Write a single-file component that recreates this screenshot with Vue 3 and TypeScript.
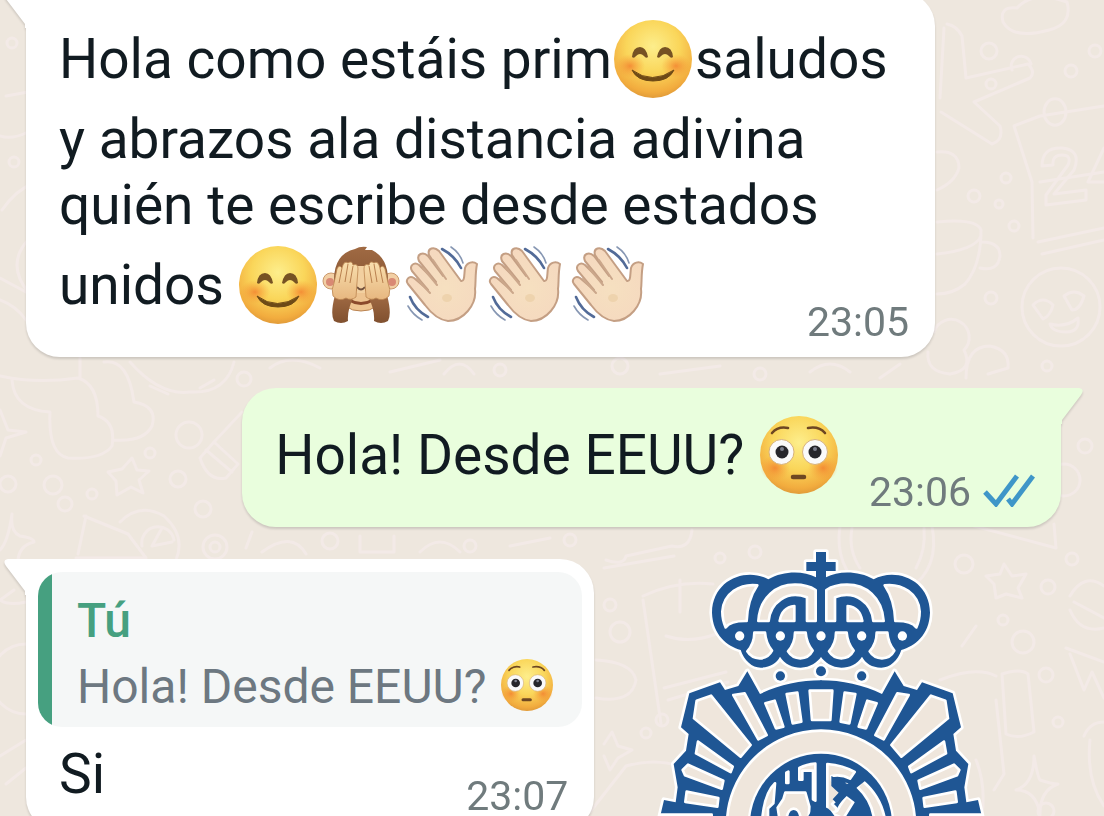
<script setup lang="ts">
interface Dot { x: number; y: number; r: number }

const firstLines: string[] = ['y abrazos ala distancia adivina', 'quién te escribe desde estados']
const closingEmoji: string[] = ['smile', 'monkey', 'wave', 'wave', 'wave']

const dots: Dot[] = [
  { x: 989, y: 51, r: 8 }, { x: 1071, y: 71, r: 6 }, { x: 1095, y: 51, r: 6 }, { x: 991, y: 84, r: 5 },
  { x: 1006, y: 178, r: 5 }, { x: 974, y: 196, r: 6 }, { x: 999, y: 204, r: 4 }, { x: 1014, y: 226, r: 5 },
  { x: 991, y: 298, r: 6 }, { x: 1047, y: 366, r: 5 }, { x: 244, y: 379, r: 7 }, { x: 189, y: 435, r: 13 },
  { x: 150, y: 453, r: 5 }, { x: 178, y: 479, r: 8 }, { x: 53, y: 485, r: 9 }, { x: 8, y: 484, r: 8 },
  { x: 36, y: 460, r: 5 }, { x: 92, y: 494, r: 5 }, { x: 65, y: 504, r: 7 }, { x: 203, y: 509, r: 8 },
  { x: 215, y: 547, r: 12 }, { x: 215, y: 547, r: 5 }, { x: 1085, y: 446, r: 7 }, { x: 1064, y: 480, r: 16 },
  { x: 964, y: 564, r: 9 }, { x: 1072, y: 559, r: 6 }, { x: 1048, y: 587, r: 7 }, { x: 755, y: 552, r: 6 },
  { x: 720, y: 558, r: 5 }, { x: 620, y: 632, r: 10 }, { x: 610, y: 605, r: 6 }, { x: 1023, y: 642, r: 11 },
  { x: 1003, y: 620, r: 5 }, { x: 1046, y: 675, r: 7 }, { x: 1058, y: 722, r: 5 }, { x: 662, y: 720, r: 6 },
  { x: 646, y: 733, r: 5 }, { x: 1046, y: 811, r: 8 }, { x: 12, y: 43, r: 5 }, { x: 14, y: 162, r: 5 },
  { x: 500, y: 370, r: 6 }, { x: 620, y: 366, r: 8 }, { x: 760, y: 374, r: 6 }, { x: 330, y: 541, r: 8 },
  { x: 470, y: 546, r: 6 }, { x: 570, y: 540, r: 6 },
]

const doodles: string[] = [
  'M1003 22q-4 -16 14 -14q16 -18 50 -6q6 22 -18 28q-36 10 -46 -8z',
  'M947 24q10 2 15 12l4 42l62 -14q8 8 2 14l-56 24l26 24q4 14 -8 18l-51 -32M940 98l4 -70M1012 70a10 10 0 1 1 19 -6',
  'M1104 106l-64 10l-26 10l18 56l1 56M1040 182l64 -10M1038 242l66 -14M1042 254l62 -14M1044 112a10 12 0 1 1 22 0a10 12 0 1 1 -22 0',
  'M1042 166q0 -19 20 -18q20 2 12 22l-20 24l32 -4v10l-40 5v-10l22 -30q4 -10 -6 -10q-10 0 -9 10zM1104 148l-16 34h16',
  'M937 222q40 -4 44 8q0 36 -16 54q-12 10 -28 10M937 254q38 -4 44 -18M982 242q18 0 18 14q-2 16 -20 12',
  'M937 152q22 -2 22 16q-4 14 -22 22',
  'M1022 307a39 39 0 1 1 78 0a39 39 0 1 1 -78 0M1033 305q10 -10 20 0q-2 10 -10 14zM1064 296q10 -8 20 0q-4 14 -12 14zM1050 324q16 4 28 -6q2 14 -12 14q-14 0 -16 -8z',
  'M934 332a18 18 0 1 1 30 18q10 20 -14 24q-24 -2 -22 -22M966 378q0 -32 24 -32q20 4 18 22l-20 6',
  'M0 376q36 8 78 2q20 6 20 38q18 6 14 30q-10 14 -44 12q-20 -4 -18 -46q-36 -2 -38 -32M80 358v20M104 362q24 -4 30 40q24 4 18 24q-8 16 -38 14',
  'M130 362q30 34 60 30q36 2 44 -30M150 386l18 8M200 388l14 -8',
  'M132 458l5 12l12 1l-10 9l4 13l-12 -6l-14 8l-1 -14l-8 -9l14 -3z',
  'M214 442l28 -30M200 458l14 -16l24 22l-12 14q-18 4 -26 -20zM206 450l26 22',
  'M84 516l44 18M78 554l8 -38M76 558h70l-18 -24M120 522q20 -20 44 -6q22 20 12 44M142 546a16 16 0 0 1 32 -6M152 546l20 -4M152 546l10 -18',
  'M0 410l8 20l18 2l-20 6l-6 18M12 514q-4 28 -12 36M12 514q-2 18 8 22q14 2 14 6q-16 4 -16 20',
  'M840 526q-6 40 24 64M932 526q8 42 -22 62M852 528q-4 22 8 40M924 528q2 22 -8 40',
  'M606 560q18 6 20 -4l46 -10q18 4 20 -16M604 568l70 -12',
  'M643 596q34 -16 70 -12M643 600l18 124M666 636q24 8 50 -2M680 580v32M664 688l62 -16M668 700l60 -18',
  'M596 660q36 2 40 20q-4 24 -40 18M604 744l8 -12l6 14l14 4l-14 8l-8 12l-6 -14',
  'M974 526l82 22l-2 -24M1004 564l8 12l14 -2l-8 14l4 10l-16 -4l-10 4l-2 -14l-8 -8l14 -2z',
  'M1070 596q14 -24 34 -10M1070 610q10 24 34 18M1074 602l30 16M1070 654l14 36l8 -18l12 26M1066 648l38 14',
  'M1002 674q18 -6 26 0l6 58q-16 8 -28 2zM996 700l8 74l-10 16M962 646l14 -20M940 680q36 -14 56 -4',
  'M1034 756q4 22 6 24q12 4 18 4q-18 6 -18 30q-4 -24 -24 -24q18 -6 18 -34M1084 736q6 -14 20 -14M1090 740q-4 40 14 66',
  'M590 812l36 -46q28 -8 54 0M976 760q10 24 6 56',
  'M0 136q12 4 28 -4M2 210q14 -20 30 -26M28 240q-22 24 0 52M0 278l26 14M6 96l22 -4M0 300q16 6 26 20',
  'M26 644a35 35 0 0 0 0 70M0 600q8 6 26 2M0 756l26 -16M6 784l20 -16M0 600l14 -10',
  'M270 368q20 -16 50 0M390 372l50 -12M444 374q16 -20 30 0M660 374l60 -8M810 372q20 -16 40 0M880 378l20 -14',
  'M262 552q30 -22 44 2M360 536v16h34v-16M420 552q20 -20 40 0M510 546l40 -8M252 532l-6 16',
]

const crownPearls: number[] = [299, 421, 543, 665, 787]
const crownDrops: number[] = [0, 122, 245, 367]
</script>

<template>
  <main class="chat">
    <svg class="defs" aria-hidden="true">
      <defs>
        <radialGradient id="face" cx="50%" cy="34%" r="68%">
          <stop offset="0" stop-color="#fdee8c" />
          <stop offset=".5" stop-color="#fad65a" />
          <stop offset=".86" stop-color="#f2ac3e" />
          <stop offset="1" stop-color="#dd9738" />
        </radialGradient>
        <radialGradient id="cheek">
          <stop offset="0" stop-color="#f27a2c" stop-opacity=".75" />
          <stop offset="1" stop-color="#f59a35" stop-opacity="0" />
        </radialGradient>
        <radialGradient id="skin" cx="55%" cy="55%" r="60%">
          <stop offset="0" stop-color="#f6e0c0" />
          <stop offset="1" stop-color="#f5d8bf" />
        </radialGradient>
        <linearGradient id="fur" x1="0" y1="0" x2="0" y2="1">
          <stop offset="0" stop-color="#a06a43" />
          <stop offset="1" stop-color="#80502f" />
        </linearGradient>
        <linearGradient id="paw" x1="0" y1="0" x2="0" y2="1">
          <stop offset="0" stop-color="#f9dfae" />
          <stop offset="1" stop-color="#e7b780" />
        </linearGradient>
        <symbol id="smile" viewBox="0 0 78 78">
          <circle cx="39" cy="39" r="39" fill="url(#face)" />
          <ellipse cx="16" cy="46" rx="15" ry="12" fill="url(#cheek)" />
          <ellipse cx="62" cy="46" rx="15" ry="12" fill="url(#cheek)" />
          <path d="M18 37Q19 27 26 27Q32 27 34 37Q32 39 30 36Q26 32 22 36Q20 39 18 37Z" fill="#765223" />
          <path d="M43 37Q45 27 51 27Q58 27 59 37Q57 39 55 36Q51 32 47 36Q45 39 43 37Z" fill="#765223" />
          <path d="M18 50Q38 65 60 50Q55 61 39 61Q23 61 18 50Z" fill="#6e4a16" stroke="#6e4a16" stroke-linejoin="round" />
        </symbol>
        <symbol id="flushed" viewBox="0 0 78 78">
          <circle cx="39" cy="39" r="39" fill="url(#face)" />
          <ellipse cx="15" cy="52" rx="15" ry="13" fill="url(#cheek)" />
          <ellipse cx="63" cy="52" rx="15" ry="13" fill="url(#cheek)" />
          <g fill="#fafafa" stroke="#d8b27a">
            <circle cx="21.5" cy="36" r="12.5" /><circle cx="55" cy="36" r="12.5" />
          </g>
          <g fill="#26262b">
            <circle cx="22" cy="36" r="6.5" /><circle cx="55" cy="36" r="6.5" />
          </g>
          <g fill="#7c7f8c"><circle cx="22" cy="33" r="2" /><circle cx="55" cy="33" r="2" /></g>
          <path d="M12 17Q18 10 28 12M48 12Q59 10 65 17" fill="none" stroke="#6e4722" stroke-width="2.6" stroke-linecap="round" />
          <path d="M33 61H44" stroke="#6e4722" stroke-width="4.5" stroke-linecap="round" />
        </symbol>
        <symbol id="monkey" viewBox="0 0 78 78">
          <circle cx="9" cy="35" r="8" fill="#f2cfa4" stroke="#c9986c" />
          <circle cx="69" cy="35" r="8" fill="#f2cfa4" stroke="#c9986c" />
          <circle cx="8" cy="36" r="4" fill="#d98974" /><circle cx="70" cy="36" r="4" fill="#d98974" />
          <path d="M12 34Q12 8 33 3Q38 0 45 1L43 4L50 4Q66 12 66 34Q64 50 39 52Q14 50 12 34Z" fill="url(#fur)" />
          <path d="M20 48Q39 40 58 48Q58 65 39 65Q20 65 20 48Z" fill="#eec491" stroke="#b98250" />
          <path d="M27 54Q39 61 51 54" fill="none" stroke="#8b4a2c" stroke-width="3" stroke-linecap="round" />
          <path d="M34 20H44L43 47H35Z" fill="#f2d0a0" />
          <path d="M35 41Q39 46 43 41" fill="none" stroke="#71503d" stroke-width="2" />
          <path id="monkey-arm" d="M13 49Q8 68 12 75Q19 79 26 75Q25 64 32 50Z" fill="url(#fur)" />
          <use href="#monkey-arm" transform="translate(78 0) scale(-1 1)" />
          <path id="monkey-paw" d="M11 50Q9 43 12 37L15 23Q17 18 20 22Q22 14 26 17Q30 14 31 19Q36 17 36 23L34 51Q29 55 24 52Q17 56 11 50Z" fill="url(#paw)" stroke="#bc8652" stroke-width=".8" />
          <use href="#monkey-paw" transform="translate(78 0) scale(-1 1)" />
          <path d="M20 22L17 37M26 18L23 36M31 20L28 37M58 22L61 37M52 18L55 36M47 20L50 37" fill="none" stroke="#b8804f" />
        </symbol>
        <symbol id="wave" viewBox="0 0 78 78">
          <path d="M3 38C0 34 4 29 9 32L23 44L7 25C4 20 9 15 14 19L31 36L14 15C11 8 18 5 23 10L38 30L24 9C22 2 29 0 34 5L56 35C60 36 59 28 60 22C62 16 68 15 72 18C70 28 71 36 70 43C72 59 58 75 43 75C34 74 26 67 20 59Z" fill="url(#skin)" stroke="#c49f84" stroke-width="2" stroke-linejoin="round" />
          <path d="M12 33L25 47M18 22L32 39M28 14L41 33" stroke="#cba78b" stroke-width="2" stroke-linecap="round" />
          <ellipse cx="42" cy="52" rx="5" ry="4" fill="#eed3ad" />
          <path d="M37 3Q50 10 56 22M5 51Q10 64 23 71" fill="none" stroke="#526b98" stroke-width="2.6" stroke-linecap="round" />
          <path d="M46 1Q55 7 58 17M3 60Q8 69 17 74" fill="none" stroke="#8797b3" stroke-width="1.6" stroke-linecap="round" />
        </symbol>
      </defs>
    </svg>

    <svg class="wallpaper" viewBox="0 0 1104 816" preserveAspectRatio="xMidYMid slice" aria-hidden="true">
      <path v-for="(d, i) in doodles" :key="i" :d="d" />
      <circle v-for="(dot, i) in dots" :key="'c' + i" :cx="dot.x" :cy="dot.y" :r="dot.r" />
    </svg>

    <article class="bubble incoming first">
      <svg class="tail" viewBox="0 0 24 36" aria-hidden="true"><path d="M24 0H5Q-1 1 3 7L22 32V36H24Z" /></svg>
      <p class="line">Hola como estáis prim<svg class="emoji" role="img" aria-label="😊"><use href="#smile" /></svg>saludos</p>
      <p v-for="text in firstLines" :key="text" class="line">{{ text }}</p>
      <div class="last">
        <p class="line">unidos <svg v-for="(name, i) in closingEmoji" :key="i" class="emoji" aria-hidden="true"><use :href="'#' + name" /></svg></p>
        <time class="time">23:05</time>
      </div>
    </article>

    <article class="bubble outgoing">
      <svg class="tail" viewBox="0 0 24 36" aria-hidden="true"><path d="M0 0H19Q25 1 21 7L2 32V36H0Z" /></svg>
      <div class="last">
        <p class="line">Hola! Desde EEUU? <svg class="emoji" role="img" aria-label="😳"><use href="#flushed" /></svg></p>
        <div class="status">
          <time class="time">23:06</time>
          <svg class="ticks" viewBox="0 0 52 34" role="img" aria-label="Leído"><path d="M2 19L13 31L34 3M25 26L29 31L50 3" /></svg>
        </div>
      </div>
    </article>

    <div class="reply-row">
      <article class="bubble incoming reply">
        <svg class="tail" viewBox="0 0 24 36" aria-hidden="true"><path d="M24 0H5Q-1 1 3 7L22 32V36H24Z" /></svg>
        <blockquote class="quote">
          <strong class="author">Tú</strong>
          <p class="quoted">Hola! Desde EEUU? <svg class="emoji small" role="img" aria-label="😳"><use href="#flushed" /></svg></p>
        </blockquote>
        <div class="last">
          <p class="line">Si</p>
          <time class="time">23:07</time>
        </div>
      </article>

      <svg class="emblem" viewBox="0 0 1080 828" role="img" aria-label="Policía Nacional">
        <defs>
          <path id="crown-half" d="M545 96H528V112C490 92 430 92 385 118C320 82 217 118 216 218C218 285 262 318 302 330C312 362 337 383 362 383C390 382 410 370 420 350C433 372 458 383 482 383C510 382 532 368 545 348Z" />
          <path id="badge-half" d="M545 421C480 421 415 435 360 462L322 394L295 438L255 450L240 427L148 460L123 562L146 582L138 632L101 672L113 742L107 787L72 780L58 840H545Z" />
          <g id="crown-holes">
            <path d="M352 136C300 130 250 160 247 215Q247 240 257 262Q272 242 320 243Q322 180 352 136Z" />
            <path d="M355 243C360 170 410 134 465 134Q502 134 527 150V243H501V172C440 148 390 190 386 243Z" />
            <path d="M419 243Q426 202 463 198V243Z" />
          </g>
          <g id="rays">
            <path d="M440 462L472 458L484 545L458 550Z" />
            <path d="M376 490L404 482L430 560L408 565Z" />
            <path d="M280 465L314 460L380 585L355 598Z" />
            <path d="M170 482L213 467L332 615L302 650L162 535Z" />
            <path d="M174 605L278 680L272 696L168 640Z" />
            <path d="M128 690L144 674L250 722L245 746L135 706Z" />
            <path d="M140 755L235 774L232 800L136 786Z" />
            <path d="M62 824H215V850H56Z" />
          </g>
        </defs>
        <g class="halo">
          <use href="#crown-half" /><use href="#crown-half" transform="translate(1086 0) scale(-1 1)" />
          <use href="#badge-half" /><use href="#badge-half" transform="translate(1086 0) scale(-1 1)" />
          <path d="M528 36H558V66H587V93H558V120H528V93H499V66H528Z" />
          <circle cx="421" cy="408" r="14" /><circle cx="543" cy="394" r="15" /><circle cx="665" cy="408" r="14" />
        </g>
        <g class="blue">
          <use href="#crown-half" /><use href="#crown-half" transform="translate(1086 0) scale(-1 1)" />
          <use href="#badge-half" /><use href="#badge-half" transform="translate(1086 0) scale(-1 1)" />
          <path d="M528 36H558V66H587V93H558V120H528V93H499V66H528Z" />
          <circle cx="421" cy="408" r="14" /><circle cx="543" cy="394" r="15" /><circle cx="665" cy="408" r="14" />
        </g>
        <g class="hole">
          <use href="#crown-holes" /><use href="#crown-holes" transform="translate(1086 0) scale(-1 1)" />
          <path v-for="x in crownDrops" :key="x" :transform="`translate(${x} 0)`" d="M343 278H375C377 305 386 320 396 332Q384 355 359 355Q334 354 322 334C336 318 343 302 343 278Z" />
          <use href="#rays" /><use href="#rays" transform="translate(1086 0) scale(-1 1)" />
          <path d="M509 452H577L571 540H516Z" />
          <circle cx="543" cy="854" r="282" />
        </g>
        <circle v-for="x in crownPearls" :key="x" :cx="x" cy="288" r="14" fill="#fff" />
        <circle cx="543" cy="854" r="220" fill="#fff" />
        <circle cx="543" cy="854" r="213" class="blue" />
        <g class="hole" transform="translate(270 600)">
          <path d="M256 71V182L249 178V92H217V119H208V84Q230 73 256 71Z" />
          <path d="M169 98L175 95V129H169Z" />
          <path d="M166 158H226L238 200L236 235H212C208 196 174 196 170 235H148L143 203L160 178Z" />
          <path d="M135 130C116 148 102 180 97 235H114V205L130 190Z" />
          <path d="M292 72Q340 76 374 96L360 116Q335 102 304 108L306 122L328 136L348 132L362 138L346 154L306 192L318 204L322 224L292 210Z" />
          <path d="M350 168L370 186L340 235L304 220L322 212L332 194Z" />
          <path d="M397 122Q452 168 464 235H432Q424 180 383 142Z" />
        </g>
        <g class="blue" transform="translate(270 600)">
          <path d="M304 108L352 132L410 92L424 108L366 154L386 170L374 186L350 168L324 194L308 178L326 158L304 138Z" />
          <path d="M248 206Q274 188 302 212L322 240H228Z" />
        </g>
      </svg>
    </div>
  </main>
</template>

<style>
body {
  margin: 0;
  background: #eee7de;
}
</style>

<style scoped>
.chat {
  position: relative;
  isolation: isolate;
  height: 100vh;
  overflow: hidden;
  background: #eee7de;
  color: #111b21;
  font-family: Roboto, "Liberation Sans", sans-serif;
  font-size: 55px;
  line-height: 66px;
}
.defs {
  position: absolute;
  width: 0;
  height: 0;
}
.wallpaper {
  position: absolute;
  z-index: -1;
  inset: 0;
  width: 100%;
  height: 100%;
  fill: none;
  stroke: #f3eae7;
  stroke-width: 3;
  stroke-linecap: round;
  stroke-linejoin: round;
}
.bubble {
  position: relative;
  box-sizing: border-box;
  padding: 20px 26px 10px 33px;
  border-radius: 34px;
  filter: drop-shadow(0 2px 1px #00000024);
}
.incoming {
  margin-left: 26px;
  background: #fff;
  border-top-left-radius: 0;
}
.outgoing {
  width: fit-content;
  margin: 31px 43px 32px auto;
  background: #e9fedd;
  border-top-right-radius: 0;
}
.first {
  margin-top: -8px;
  margin-right: 169px;
}
.tail {
  position: absolute;
  top: 0;
  width: 24px;
  height: 36px;
}
.incoming .tail {
  right: 100%;
  margin-right: -1px;
  fill: #fff;
}
.outgoing .tail {
  left: 100%;
  margin-left: -1px;
  fill: #e9fedd;
}
.line,
.quoted {
  margin: 0;
  white-space: nowrap;
}
.emoji {
  width: 78px;
  height: 78px;
  margin: 8px 3px 8px 2px;
  vertical-align: -28px;
}
.last {
  display: flex;
  justify-content: space-between;
  gap: 28px;
}
.time {
  align-self: flex-end;
  margin: 64px 0 5px;
  color: #707b7d;
  font-size: 41px;
  line-height: 40px;
}
.status {
  display: flex;
  align-items: flex-end;
  gap: 12px;
}
.ticks {
  width: 52px;
  height: 34px;
  margin-bottom: 10px;
  fill: none;
  stroke: #3f96c8;
  stroke-width: 5;
}
.reply-row {
  display: flex;
  align-items: flex-start;
}
.reply {
  flex: none;
  padding: 13px 12px 10px;
}
.quote {
  margin: 0 0 14px;
  padding: 16px 26px 7px 39px;
  border-radius: 24px;
  background: linear-gradient(to right, #46a080 14px, #f5f7f7 14px);
  color: #6d7881;
  font-size: 48px;
}
.author {
  display: block;
  color: #46a080;
  font-weight: 500;
}
.emoji.small {
  width: 52px;
  height: 52px;
  margin: 0 3px;
  vertical-align: -8px;
}
.reply .last {
  padding: 0 14px 0 21px;
}
.reply .time {
  margin-top: 35px;
}
.emblem {
  flex: none;
  width: 360px;
  height: 276px;
  margin: -19px 0 0 46px;
  overflow: visible;
}
.halo {
  fill: #fff;
  stroke: #fff;
  stroke-width: 16;
  stroke-linejoin: round;
}
.blue {
  fill: #1f5694;
}
.hole {
  fill: #efe6dc;
  stroke: #fff;
  stroke-width: 8;
  stroke-linejoin: round;
}
</style>
